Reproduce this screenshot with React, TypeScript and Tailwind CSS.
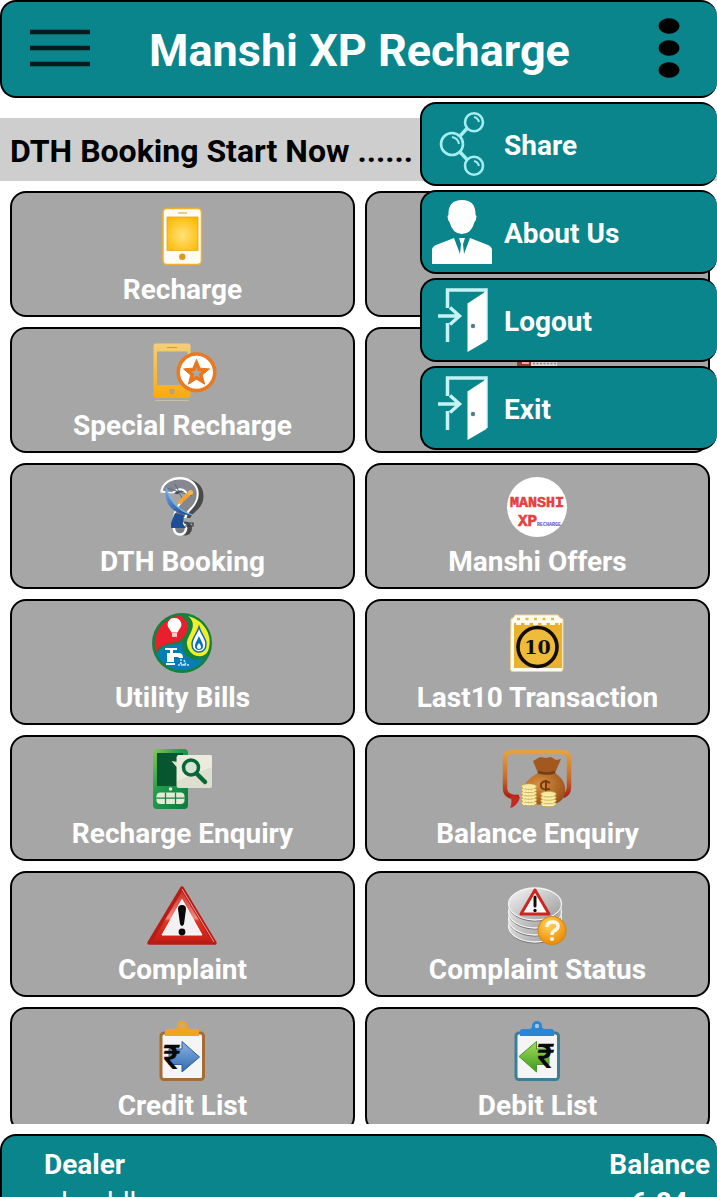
import type { ReactNode } from "react";

function TileArt({ children }: { children?: ReactNode }) {
  return (
    <svg viewBox="1 0 70 60" className="h-[60px] w-[70px] shrink-0 overflow-visible" aria-hidden="true">
      {children}
    </svg>
  );
}

function PhoneArt() {
  return (
    <TileArt>
      <defs>
        <radialGradient id="phoneScreen" cx="50%" cy="55%" r="65%">
          <stop offset="0" stopColor="#ffe27a" />
          <stop offset="1" stopColor="#fdb900" />
        </radialGradient>
      </defs>
      <rect x="16" y="2.5" width="38.5" height="56" rx="4" fill="#fffdf4" stroke="#f3ae2c" strokeWidth="1.6" />
      <rect x="20" y="11" width="31" height="33.5" fill="url(#phoneScreen)" stroke="#e9a51c" strokeWidth="0.8" />
      <path d="M31 7h9" stroke="#e3ab3c" strokeWidth="1.2" />
      <circle cx="35.3" cy="50.7" r="3.2" fill="#d99a1e" />
    </TileArt>
  );
}

function SpecialArt() {
  return (
    <TileArt>
      <defs>
        <linearGradient id="specialPhone" x1="0" y1="0" x2="0" y2="1">
          <stop offset="0" stopColor="#f3cf7a" />
          <stop offset="1" stopColor="#fba90c" />
        </linearGradient>
      </defs>
      <path
        d="M9 1.5h32a2.5 2.5 0 0 1 2.5 2.5v50a2 2 0 0 1-2 2H8.5a2 2 0 0 1-2-2V4A2.5 2.5 0 0 1 9 1.5zM10 9.500v33.500h30.500V9.500z"
        fillRule="evenodd"
        fill="url(#specialPhone)"
      />
      <path d="M8 58.5h34" stroke="#c9bda4" strokeWidth="1" />
      <path d="M20 5.5h10" stroke="#d89a2a" strokeWidth="1" />
      <circle cx="25" cy="49.5" r="2.8" fill="#b9a27a" />
      <circle cx="49.500" cy="30.3" r="18.3" fill="#fff" stroke="#e97a1f" strokeWidth="3.6" />
      <path
        d="M49.500 17.5l3.6 8.700 9.400.7-7.200 6.100 2.300 9.200-8.100-5-8.100 5 2.300-9.200-7.200-6.100 9.400-.7z"
        fill="#e9761c"
        stroke="#e9761c"
        strokeLinejoin="round"
      />
      <path d="M49.500 25.5l1.500 3.600 3.900.3-3 2.500.9 3.800-3.300-2.100-3.300 2.100.9-3.800-3-2.500 3.900-.3z" fill="#b2a79f" />
    </TileArt>
  );
}

function HiddenCardArt() {
  return (
    <TileArt>
      <rect x="15" y="8" width="40" height="20" fill="#d8d2d0" />
      <rect x="15" y="8" width="14" height="20" fill="#8f3d38" />
      <path d="M20 21h7" stroke="#f0a5a0" strokeWidth="2" />
      <path d="M31 21.500h23" stroke="#8d8688" strokeWidth="1.500" strokeDasharray="2 1.500" />
    </TileArt>
  );
}

function DishArt() {
  return (
    <TileArt>
      <defs>
        <linearGradient id="dishBlue" x1="0" y1="0" x2="1" y2="1">
          <stop offset="0" stopColor="#6fa8e4" />
          <stop offset="1" stopColor="#123d86" />
        </linearGradient>
      </defs>
      <g fill="none">
        <path d="M25 15C27 4 50 4 50 18c0 11-13 12-13 22" stroke="#4a4a4a" strokeWidth="13" />
        <circle cx="38" cy="50.5" r="7" fill="#4a4a4a" />
        <path d="M20 15C21 3 45 2 45 16c0 11-12 12-12 24" stroke="#fff" strokeWidth="13.500" />
        <path d="M20.500 13.500C22 4 45 3 45 16c0 11-12 12-12 23" stroke="#85898f" strokeWidth="9.500" />
        <path d="M27 15C30 8 41 11 39 18" stroke="#fff" strokeWidth="1.600" />
      </g>
      <circle cx="33" cy="50.500" r="7.300" fill="#fff" />
      <circle cx="33" cy="50.500" r="4.800" fill="#777d86" />
      <path d="M20 10l25 8M28 6l9 18" stroke="#596c85" strokeWidth="1" />
      <path d="M32 25L44 14" stroke="#f0a436" strokeWidth="4" />
      <circle cx="43.500" cy="14.500" r="2.500" fill="#f7b64f" />
      <path d="M19 10c-3 14 6 28 27 27-10-3-21-9-27-27z" fill="url(#dishBlue)" />
      <path d="M28 35l9 2-1 9 3 4H24v-5z" fill="#1d4d94" />
      <path d="M37 45h9v3h-8" fill="none" stroke="#30384a" strokeWidth="1.200" />
      <path d="M19.500 10c3 14 14 24 26.500 27" fill="none" stroke="#77b5f2" strokeWidth="1.200" />
    </TileArt>
  );
}

function UtilityArt() {
  return (
    <TileArt>
      <circle cx="35" cy="29" r="30" fill="#15803f" />
      <path d="M33 1.5A28 28 0 0 0 9 38c8-12 20-7 25-12 6-6 12-17-1-24.5z" fill="#e8202d" />
      <path d="M41 2c12 10-2 20-1 28 1 12 16 17 21 7C67 22 57 6 41 2z" fill="#f4ee27" />
      <path d="M9.5 40c8-13 19-7 26-12-2 15 12 21 22 16-10 17-37 17-48-4z" fill="#087db5" />
      <path d="M27.5 4a6.5 6.5 0 0 0-5 11l2 3.5h6l2-3.5a6.5 6.5 0 0 0-5-11z" fill="#fff" />
      <path d="M25 20h5m-5 2h5" stroke="#fff" strokeWidth="1.5" />
      <path d="M52 13c-2 7-7 11-7 17 0 5 3 8 7 8s7-3 7-8c0-6-5-10-7-17z" fill="#fff" stroke="#136cae" strokeWidth="1.5" />
      <path d="M52 22c-2 5-4 7-4 10a4 4 0 0 0 8 0c0-3-2-5-4-10z" fill="#0873b9" />
      <path d="M52 29c-1.5 2-2 3-2 4a2 2 0 0 0 4 0c0-1-.5-2-2-4z" fill="#fff" />
      <path d="M18 34h12v2H18zM23 35h3v4h5c4 0 5 2 5 5h-4l-1-1h-4v5h-7v-9h3zM19 49h9v2h-9z" fill="#fff" />
      <path d="M34 45v5m3-4 2 5m-8 0h11m-9-2 4 2" stroke="#c7e8f7" strokeWidth="1.5" strokeDasharray="2 1" />
    </TileArt>
  );
}

function OffersArt() {
  return (
    <TileArt>
      <circle cx="35" cy="29" r="30" fill="#fff" />
      <text x="35" y="29" textAnchor="middle" fontSize="15" fontWeight="700" fill="#e3403f" stroke="#e3403f" strokeWidth="0.6" fontFamily="Liberation Mono, monospace">
        MANSHI
      </text>
      <text x="16" y="48" fontSize="16" fontWeight="700" fill="#e3403f" stroke="#e3403f" strokeWidth="0.6" fontFamily="Liberation Mono, monospace">
        XP
      </text>
      <text x="35" y="48" fontSize="5" fontWeight="700" fill="#4c55cf" fontFamily="Liberation Mono, monospace">
        RECHARGE
      </text>
    </TileArt>
  );
}

function CalendarArt() {
  return (
    <TileArt>
      <path d="M9 5q3-1 4-4h43q1 3 5 4v50q0 2.5-2.5 2.5h-48Q8.5 57.5 8.5 55z" fill="#fffdf2" stroke="#efd488" strokeWidth="1" />
      <path d="M12 9h48v45H12z" fill="#e9b12c" />
      <path d="M14 9h44" stroke="#fffdf2" strokeWidth="4" strokeDasharray="5 3.5" />
      <path d="M15 5h42" stroke="#e5b847" strokeWidth="2.5" strokeDasharray="3 5.5" />
      <circle cx="35.5" cy="33" r="19.500" fill="#efbb3b" stroke="#120d02" strokeWidth="3.6" />
      <text x="35.5" y="40" textAnchor="middle" fontSize="19" fontWeight="700" fill="#120d02" fontFamily="DejaVu Serif, serif">
        10
      </text>
    </TileArt>
  );
}

function EnquiryArt() {
  return (
    <TileArt>
      <defs>
        <linearGradient id="enquiryPhone" x1="0" y1="0" x2="1" y2="1">
          <stop offset="0" stopColor="#86c955" />
          <stop offset="0.4" stopColor="#229c4c" />
          <stop offset="1" stopColor="#0b7b3c" />
        </linearGradient>
      </defs>
      <rect x="6" y="-1" width="35" height="60" rx="4" fill="url(#enquiryPhone)" />
      <path d="M10 3h26v33H10z" fill="#07562f" />
      <circle cx="23.5" cy="39" r="1.8" fill="#e9f1df" />
      <rect x="9.500" y="42.5" width="28" height="11.5" rx="4" fill="#e2ecd5" />
      <path d="M9.5 48.2h28M18.5 42.5V54m10-11.5V54" stroke="#188046" strokeWidth="1.3" />
      <path d="M31 5h32q2 0 2 2v29q0 2-2 2H32q-2.5 0-2.5-2V17l-5-6 5 .8V7z" fill="#dedfce" />
      <path d="M31 5h32q2 0 2 2v10L30 31V7z" fill="#eceadd" />
      <circle cx="44" cy="17.5" r="7.5" fill="#d6e4d3" stroke="#086638" strokeWidth="3.5" />
      <path d="M50 24l8 8" stroke="#086638" strokeWidth="4.5" strokeLinecap="round" />
    </TileArt>
  );
}

function Coins({ x, y, rows }: { x: number; y: number; rows: number }) {
  return (
    <g>
      {Array.from({ length: rows }, (_, i) => (
        <g key={i}>
          <ellipse cx={x} cy={y - i * 3.3} rx="7.8" ry="2.8" fill="#f6e79c" stroke="#bd9b42" strokeWidth="0.7" />
          <path d={`M${x - 6} ${y - i * 3.3 + 1.5}h12`} stroke="#fff6c9" strokeWidth="1" strokeDasharray="2 1" />
        </g>
      ))}
    </g>
  );
}

function BalanceArt() {
  return (
    <TileArt>
      <defs>
        <linearGradient id="bubbleEdge" x1="0" y1="0" x2="0" y2="1">
          <stop offset="0" stopColor="#e5a13f" />
          <stop offset="0.6" stopColor="#c7682a" />
          <stop offset="1" stopColor="#a91f17" />
        </linearGradient>
        <radialGradient id="bagBody" cx="40%" cy="35%" r="70%">
          <stop offset="0" stopColor="#da8e3c" />
          <stop offset="1" stopColor="#96501c" />
        </radialGradient>
      </defs>
      <path
        d="M17 47H12Q3 46 3 38V9q0-7 7-7h50q7 0 7 7v28q0 7-6 9"
        fill="none"
        stroke="url(#bubbleEdge)"
        strokeWidth="4.5"
      />
      <path d="M8 45l10 2q-2 9-10 11 3-7 0-13z" fill="#c52a20" />
      <path d="M36 23L31 11l7-4 6 1 5-1 5 3 5-1-6 14z" fill="#a3581f" />
      <path d="M36 23h17c9 6 11 13 10 20q-2 12-19 12-23 0-24-12c0-8 7-15 16-20z" fill="url(#bagBody)" />
      <path d="M36 22q9 3 17 0" fill="none" stroke="#70401a" strokeWidth="2.5" />
      <path d="M48 33q-6-4-9 1-1 7 9 5m-4-9v12" fill="none" stroke="#713b12" strokeWidth="2" />
      <Coins x={27} y={53} rows={6} />
      <Coins x={46.5} y={54} rows={4} />
    </TileArt>
  );
}

function ComplaintArt() {
  return (
    <TileArt>
      <defs>
        <linearGradient id="warnRed" x1="0" y1="0" x2="0" y2="1">
          <stop offset="0" stopColor="#c9251c" />
          <stop offset="0.55" stopColor="#f28a80" />
          <stop offset="0.6" stopColor="#e03625" />
          <stop offset="1" stopColor="#c51b12" />
        </linearGradient>
      </defs>
      <path d="M35 2L68 57H2z" fill="url(#warnRed)" stroke="#b51d16" strokeWidth="3.5" strokeLinejoin="round" />
      <path d="M35 3L67 56" stroke="#ec9a93" strokeWidth="1" />
      <path d="M35 13.5L55 49H15z" fill="#f3f2f2" stroke="#fff" strokeWidth="1" strokeLinejoin="round" />
      <path d="M31 23q0-4 4-4t4 4l-2 15q-2 4-4 0z" fill="#090909" />
      <circle cx="35" cy="46" r="3.4" fill="#090909" />
    </TileArt>
  );
}

function StatusArt() {
  return (
    <TileArt>
      <defs>
        <linearGradient id="diskFace" x1="0" y1="0" x2="1" y2="1">
          <stop offset="0" stopColor="#f8f8f8" />
          <stop offset="1" stopColor="#979797" />
        </linearGradient>
        <radialGradient id="questionBall" cx="40%" cy="30%" r="75%">
          <stop offset="0" stopColor="#ffd35d" />
          <stop offset="1" stopColor="#ec8500" />
        </radialGradient>
      </defs>
      {[40, 33, 26, 18].map((y) => (
        <g key={y}>
          <ellipse cx="33" cy={y + 1.5} rx="26.5" ry="16" fill="#6d6d6d" />
          <ellipse cx="33" cy={y} rx="26.5" ry="16" fill="url(#diskFace)" stroke="#f4f4f4" strokeWidth="1.3" />
        </g>
      ))}
      <path d="M33 4L47 28H19z" fill="#fff" stroke="#cb2620" strokeWidth="3" strokeLinejoin="round" />
      <path d="M33 11v9" stroke="#111" strokeWidth="3" strokeLinecap="round" />
      <circle cx="33" cy="24.5" r="1.7" fill="#111" />
      <circle cx="50" cy="44.5" r="14" fill="url(#questionBall)" stroke="#d58a16" strokeWidth="1.2" />
      <path d="M45 41q0-5 5-5 6 0 6 4 0 3-4 5-2 1-2 4" fill="none" stroke="#fffbe8" strokeWidth="3.5" />
      <circle cx="50" cy="53" r="2" fill="#fffbe8" />
    </TileArt>
  );
}

function Clipboard({ edge, clip, hole, children }: { edge: string; clip: string; hole: string; children: ReactNode }) {
  return (
    <TileArt>
      <rect x="14" y="11" width="42.5" height="46.5" rx="3" fill="#f5f5f6" stroke={edge} strokeWidth="3" />
      <path d="M18 14V9q0-2 3-2h6q3 0 3-3a5 5 0 0 1 10 0q0 3 3 3h6q3 0 3 2v5z" fill={clip} />
      <circle cx="35" cy="4" r="2.2" fill={hole} />
      {children}
    </TileArt>
  );
}

function CreditArt() {
  return (
    <Clipboard edge="#a56c36" clip="#efa521" hole="#c6ad83">
      <defs>
        <linearGradient id="creditArrow" x1="0" y1="0" x2="0" y2="1">
          <stop offset="0" stopColor="#8db4e1" />
          <stop offset="1" stopColor="#2f6bb2" />
        </linearGradient>
      </defs>
      <path d="M22 27h13v-7.5L52.5 35 35 50v-7.5H22z" fill="url(#creditArrow)" stroke="#315b92" strokeWidth="1" />
      <text x="16" y="47" fontSize="34" fontWeight="500" fill="#080808" fontFamily="Roboto, sans-serif">
        ₹
      </text>
    </Clipboard>
  );
}

function DebitArt() {
  return (
    <Clipboard edge="#3a7f98" clip="#2a86d2" hole="#a9c5de">
      <defs>
        <linearGradient id="debitArrow" x1="0" y1="0" x2="0" y2="1">
          <stop offset="0" stopColor="#a5dd58" />
          <stop offset="1" stopColor="#3c9a20" />
        </linearGradient>
      </defs>
      <path d="M47 27H34.5v-7.5L17 34.5 34.5 50v-7.5H47z" fill="url(#debitArrow)" stroke="#4c952b" strokeWidth="1" />
      <text x="35" y="46" fontSize="34" fontWeight="500" fill="#080808" fontFamily="Roboto, sans-serif">
        ₹
      </text>
    </Clipboard>
  );
}

function MenuArt({ children }: { children: ReactNode }) {
  return (
    <svg viewBox="0 0 60 64" className="h-16 w-[60px] shrink-0" aria-hidden="true">
      {children}
    </svg>
  );
}

function ShareArt() {
  return (
    <MenuArt>
      <g fill="none" stroke="#a5eef0" strokeWidth="2.6">
        <circle cx="20" cy="32" r="11" />
        <circle cx="42" cy="10.3" r="9" />
        <circle cx="42" cy="53.7" r="9" />
        <path d="M28 24l7-7.5M28 40l7 7.5" strokeWidth="3.5" />
        <path d="M20 25q6 1 7 7M42 5q4 1 5 5M42 49q4 1 5 5" strokeWidth="2" />
      </g>
    </MenuArt>
  );
}

function PersonArt() {
  return (
    <MenuArt>
      <path
        d="M30 0c9 0 14 5 13.5 15l1 1q0 4-2 6-3 12-12.500 12T17.500 22q-2-2-2-6l1-1C16 5 21 0 30 0z"
        fill="#fff"
      />
      <path d="M0 64V50q0-3 4-5l18-7 6 16 1-10-2-6h6l-2 6 1 10 6-16 18 7q4 2 4 5v14z" fill="#fff" />
    </MenuArt>
  );
}

function DoorArt() {
  return (
    <MenuArt>
      <g fill="none" stroke="#c5f3f4" strokeWidth="3.5">
        <path d="M15.5 20V2H54v50M15.5 35v19" />
        <path d="M6 28h21M18 19.500l9.500 8.500-9.500 8.500" />
      </g>
      <path d="M35.5 15.5L54.500 3v50L35.500 64z" fill="#fff" />
      <circle cx="41" cy="38" r="2.2" fill="#4f7f88" />
    </MenuArt>
  );
}

const tiles: { label: string; art: ReactNode }[] = [
  { label: "Recharge", art: <PhoneArt /> },
  { label: "", art: <TileArt /> },
  { label: "Special Recharge", art: <SpecialArt /> },
  { label: "", art: <HiddenCardArt /> },
  { label: "DTH Booking", art: <DishArt /> },
  { label: "Manshi Offers", art: <OffersArt /> },
  { label: "Utility Bills", art: <UtilityArt /> },
  { label: "Last10 Transaction", art: <CalendarArt /> },
  { label: "Recharge Enquiry", art: <EnquiryArt /> },
  { label: "Balance Enquiry", art: <BalanceArt /> },
  { label: "Complaint", art: <ComplaintArt /> },
  { label: "Complaint Status", art: <StatusArt /> },
  { label: "Credit List", art: <CreditArt /> },
  { label: "Debit List", art: <DebitArt /> },
];

const menu: { label: string; art: ReactNode }[] = [
  { label: "Share", art: <ShareArt /> },
  { label: "About Us", art: <PersonArt /> },
  { label: "Logout", art: <DoorArt /> },
  { label: "Exit", art: <DoorArt /> },
];

export default function App() {
  return (
    <div className="relative flex h-screen flex-col overflow-hidden bg-white font-['Roboto',sans-serif]">
      <header className="flex h-[98px] shrink-0 items-center justify-between rounded-2xl border-2 border-r-0 border-black bg-[#0a858c] px-7 pb-0.5">
        <button type="button" aria-label="Menu">
          <svg viewBox="0 0 60 40" className="h-10 w-[60px]" aria-hidden="true">
            <path d="M0 4h60M0 20h60M0 36h60" stroke="#03191a" strokeWidth="4.5" />
          </svg>
        </button>
        <h1 className="pt-1 text-[45px] leading-none font-bold text-white">Manshi XP Recharge</h1>
        <button type="button" aria-label="More" className="flex w-[60px] justify-end pr-2">
          <svg viewBox="0 0 24 60" className="h-[60px] w-6" aria-hidden="true">
            <ellipse cx="12" cy="8" rx="10.5" ry="7.8" />
            <ellipse cx="12" cy="30" rx="10.5" ry="7.8" />
            <ellipse cx="12" cy="52" rx="10.5" ry="7.8" />
          </svg>
        </button>
      </header>

      <p className="mt-5 flex h-[63px] shrink-0 items-center bg-[#cecece] px-2.5 pt-0.5 text-[32px] font-bold whitespace-nowrap text-black">
        DTH Booking Start Now ......
      </p>

      <main className="min-h-0 flex-1 overflow-hidden pt-2.5 pr-[7px] pl-2.5">
        <div className="grid grid-cols-2 gap-2.5">
          {tiles.map((tile, i) => (
            <button
              key={i}
              type="button"
              className="flex h-[126px] flex-col items-center rounded-2xl border-2 border-black bg-[#a6a6a6] pt-[13px] text-[28px] leading-10 font-bold text-white"
            >
              {tile.art}
              <span className="mt-1">{tile.label}</span>
            </button>
          ))}
        </div>
      </main>

      <footer className="mt-2.5 flex h-[63px] shrink-0 items-start justify-between overflow-hidden rounded-t-2xl border-2 border-r-0 border-b-0 border-black bg-[#0a858c] pt-2.5 pr-[7px] pl-[42px] text-[28px] leading-[38px] font-bold text-white">
        <dl>
          <dt>Dealer</dt>
          <dd className="pl-2 font-normal">deaddl</dd>
        </dl>
        <dl className="text-center">
          <dt>Balance</dt>
          <dd>6.84</dd>
        </dl>
      </footer>

      <nav className="absolute top-[102px] right-0 flex w-[297px] flex-col gap-1">
        {menu.map((item) => (
          <button
            key={item.label}
            type="button"
            className="flex h-[84px] items-center gap-3 rounded-2xl border-2 border-r-0 border-black bg-[#0a858c] pl-2.5 text-[28px] font-bold text-white"
          >
            {item.art}
            <span className="pt-1">{item.label}</span>
          </button>
        ))}
      </nav>
    </div>
  );
}
